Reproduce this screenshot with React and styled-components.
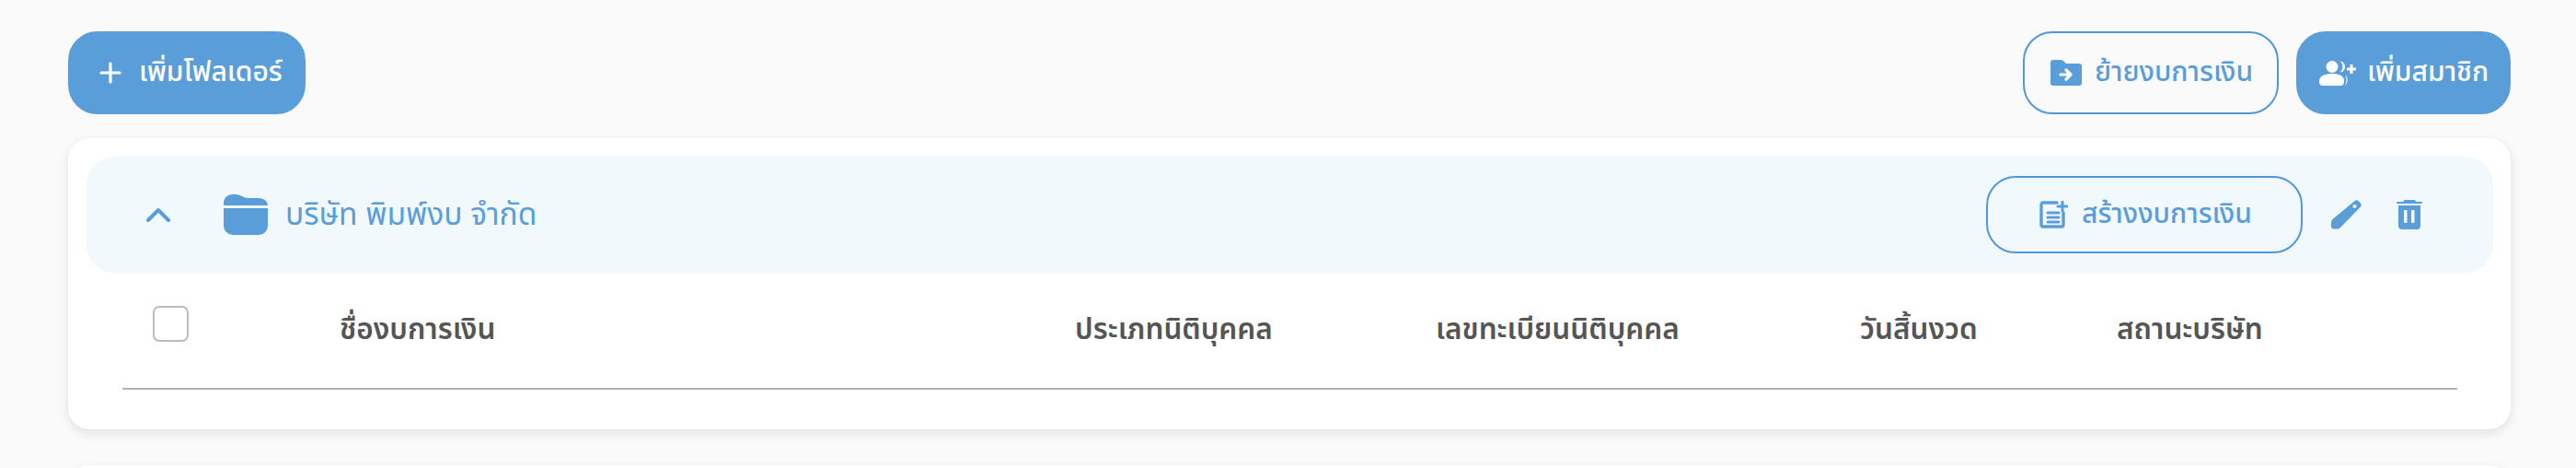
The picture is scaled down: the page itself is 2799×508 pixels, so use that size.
import React from 'react';
import styled, { createGlobalStyle } from 'styled-components';

const blue = '#5a9ed9';
const thai = '"Noto Sans Thai", "Noto Sans", "Liberation Sans", sans-serif';
const Global = createGlobalStyle`
  html, body { margin: 0; padding: 0; background: #fafafa; }
  body { font-family: ${thai}; }
`;
const Page = styled.div`height: 508px; box-sizing: border-box; overflow: hidden; padding: 34px 71px 0 74px;`;
const Toolbar = styled.div`display: flex; justify-content: space-between; margin-bottom: 26px;`;
const Group = styled.div`display: flex; gap: 19px;`;
const Button = styled.button`
  display: flex; align-items: center; justify-content: flex-start; gap: ${p => p.$gap}px;
  height: ${p => p.$h || 90}px; width: ${p => p.$w}px; padding: 0 0 0 ${p => p.$pad}px;
  border-radius: 32px; box-sizing: border-box; white-space: nowrap;
  border: 2px solid ${p => p.$outline ? '#5297d6' : blue}; font: 500 30px ${thai};
  background: ${p => p.$outline ? 'transparent' : blue};
  color: ${p => p.$outline ? blue : '#fff'};
`;
const Card = styled.section`
  background: #fff; border-radius: 24px; padding: 20px 19px 0 20px; height: 316px; box-sizing: border-box;
  box-shadow: 0 4px 12px rgba(0,0,0,.1); margin-bottom: 39px;
`;
const Header = styled.div`
  height: 126px; background: #f2f9fd; border-radius: 30px; display: flex; align-items: center;
  padding: 0 77px 0 65px; color: ${blue};
`;
const Title = styled.div`display: flex; align-items: center; gap: 19px; flex: 1; margin-left: 58px; font-size: 33.500px; font-weight: 400;`;
const Actions = styled.div`display: flex; align-items: center;`;
const IconButton = styled.span`display: flex; margin-left: ${p => p.$ml}px;`;
const Row = styled.div`
  display: grid; grid-template-columns: 203px 799px 392px 461px 279px auto; align-items: center;
  height: 125px; margin: 0 39px; padding-left: 33px; border-bottom: 2px solid #b3b3b3;
  font-size: 31.500px; font-weight: 600; color: #555;
`;
const Check = styled.span`display: block; align-self: start; margin-top: 36px; width: 39px; height: 39px; border: 2px solid #bbb; border-radius: 7px; box-sizing: border-box;`;

const PlusIcon = () => <svg width="24" height="24" viewBox="0 0 24 24" stroke="#fff" strokeWidth="3.2" strokeLinecap="round">
  <path d="M12 2v20M2 12h20" /></svg>;
const ChevronIcon = () => <svg width="26" height="16" viewBox="0 0 26 16" fill="none" stroke={blue} strokeWidth="4" strokeLinecap="round" strokeLinejoin="round">
  <path d="M2 14 13 3l11 11" /></svg>;
const FolderIcon = () => <svg width="48" height="44" viewBox="0 0 48 44" fill={blue}>
  <path d="M0 12V9a9 9 0 0 1 9-9h4c6 0 8 4 14 4h11c6 0 10 4 10 8zM0 15h48v19a10 10 0 0 1-10 10H10A10 10 0 0 1 0 34z"/></svg>;
const MoveIcon = () => <svg width="34" height="28" viewBox="0 0 34 28" fill={blue}>
  <path d="M3 0h8c2 0 3 1 4 2l2 2h14a3 3 0 0 1 3 3v18a3 3 0 0 1-3 3H3a3 3 0 0 1-3-3V3a3 3 0 0 1 3-3z"/>
  <path d="M11 16h11M17 11l5 5-5 5" stroke="#fff" strokeWidth="3.2" strokeLinecap="round" strokeLinejoin="round" fill="none"/></svg>;
const UserIcon = () => <svg width="40" height="27" viewBox="0 0 40 27" fill="#fff">
  <circle cx="14" cy="6.5" r="6.5"/><path d="M0 22c0-6 7-8 14-8s13 2 13 8c0 3-1 5-4 5H4c-3 0-4-2-4-5z"/>
  <path d="M22 .5c2.500 1 3.500 3.500 3.500 6s-1 5-3.500 6c4 0 6-3 6-6s-2-6-6-6zM28 15c2 2 2 9 0 12c3-2 4-9 0-12z"/>
  <path d="M35 4v10M30 9h10" stroke="#fff" strokeWidth="3"/></svg>;
const DocIcon = () => <svg width="31" height="30" viewBox="0 0 31 30" fill="none" stroke={blue} strokeLinecap="round">
  <path d="M19 2H4a2 2 0 0 0-2 2v22a2 2 0 0 0 2 2h20a2 2 0 0 0 2-2V13" strokeWidth="3.4" strokeLinejoin="round"/>
  <path d="M9 13h12M9 18h12M9 23h12" strokeWidth="3"/><path d="M25 1v10M20 6h10" strokeWidth="3"/></svg>;
const PencilIcon = () => <svg width="33" height="32" viewBox="0 0 33 32" fill={blue}>
  <path fillRule="evenodd" d="M25 1.500c2-2 3.500-1.500 5 0l1.500 1.500c1.500 1.500 1.500 3.500 0 5L11 29c-1 1-2 1.500-3 2.500H2.500c-1.500 0-2.500-1-2.500-2.500v-5c0-1 .5-2 1.500-3zM25.500 5a2 2 0 1 0 .01 0z"/></svg>;
const TrashIcon = () => <svg width="28" height="32" viewBox="0 0 28 32" fill={blue}>
  <path fillRule="evenodd" d="M9 0h10c1 0 2 1 2.500 2H27c.6 0 1 .4 1 1s-.4 1-1 1H1c-.6 0-1-.4-1-1s.4-1 1-1h6.500C8 1 8 0 9 0zM2 6h24v22a4 4 0 0 1-4 4H6a4 4 0 0 1-4-4zm7 5c-.6 0-1 .4-1 1v12c0 .6.4 1 1 1h1.500c.6 0 1-.4 1-1V12c0-.6-.4-1-1-1zm8 0c-.6 0-1 .4-1 1v12c0 .6.4 1 1 1h1.500c.6 0 1-.4 1-1V12c0-.6-.4-1-1-1z"/></svg>;

export default function App() {
  return <>
    <Global />
    <Page>
      <Toolbar>
        <Button $w={258} $pad={32} $gap={19}><PlusIcon />เพิ่มโฟลเดอร์</Button>
        <Group>
          <Button $outline $w={278} $pad={28} $gap={14}><MoveIcon />ย้ายงบการเงิน</Button>
          <Button $w={233} $pad={23} $gap={12}><UserIcon />เพิ่มสมาชิก</Button>
        </Group>
      </Toolbar>
      <Card>
        <Header>
          <ChevronIcon />
          <Title><FolderIcon />บริษัท พิมพ์งบ จำกัด</Title>
          <Actions>
            <Button $outline $w={344} $h={84} $pad={56} $gap={15}><DocIcon />สร้างงบการเงิน</Button>
            <IconButton $ml={31}><PencilIcon /></IconButton>
            <IconButton $ml={38}><TrashIcon /></IconButton>
          </Actions>
        </Header>
        <Row>
          <Check />
          <span>ชื่องบการเงิน</span>
          <span>ประเภทนิติบุคคล</span>
          <span>เลขทะเบียนนิติบุคคล</span>
          <span>วันสิ้นงวด</span>
          <span>สถานะบริษัท</span>
        </Row>
      </Card>
      <Card />
    </Page>
  </>;
}
